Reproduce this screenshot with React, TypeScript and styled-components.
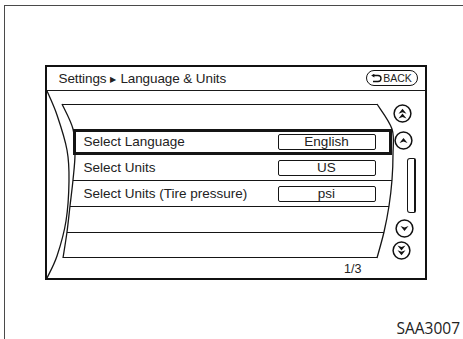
import React from "react";
import styled, { createGlobalStyle } from "styled-components";

type Pt = [number, number];

// Catmull-Rom through the measured points, as cubic bezier segments
const smooth = (pts: Pt[]) => {
  let d = `M${pts[0][0]} ${pts[0][1]}`;
  for (let i = 0; i < pts.length - 1; i++) {
    const p0 = pts[i - 1] || pts[i];
    const p1 = pts[i];
    const p2 = pts[i + 1];
    const p3 = pts[i + 2] || p2;
    const c1x = p1[0] + (p2[0] - p0[0]) / 6;
    const c1y = p1[1] + (p2[1] - p0[1]) / 6;
    const c2x = p2[0] - (p3[0] - p1[0]) / 6;
    const c2y = p2[1] - (p3[1] - p1[1]) / 6;
    d += ` C${c1x} ${c1y} ${c2x} ${c2y} ${p2[0]} ${p2[1]}`;
  }
  return d;
};

const leftEdge: Pt[] = [
  [15, 13], [26, 38], [28, 63], [26, 89], [23, 115], [20, 141], [16, 167],
];
const rightEdge: Pt[] = [
  [330, 13], [345, 38], [346, 63], [345, 89], [342, 115], [337, 141], [330, 167],
];
const outerEdge: Pt[] = [
  [0, 0], [10, 24], [20, 59], [22, 90], [19, 130], [10, 165], [0, 187],
];

const VALUE_RIGHT = 329;
const TEXT_LEFT = 37;

const rows = [
  { label: "", value: "" },
  { label: "Select Language", value: "English", active: true },
  { label: "Select Units", value: "US" },
  { label: "Select Units (Tire pressure)", value: "psi" },
  { label: "", value: "" },
  { label: "", value: "" },
];

const GlobalStyle = createGlobalStyle`
  html, body {
    margin: 0;
    padding: 0;
    background: #fff;
  }
  body {
    font-family: "Liberation Sans", Arial, sans-serif;
    color: #1a1a1a;
  }
`;

const Page = styled.div`
  width: 463px;
  height: 339px;
  box-sizing: border-box;
  padding: 5px 0 0 4px;
  overflow: hidden;
`;

const Frame = styled.div`
  height: 100%;
  box-sizing: border-box;
  border-top: 1.5px solid #4a4a4a;
  border-left: 1.5px solid #4a4a4a;
  display: flex;
  flex-direction: column;
  padding: 58.5px 0 0 39.5px;
`;

const Screen = styled.div`
  width: 382px;
  height: 215px;
  box-sizing: border-box;
  border: 2px solid #111;
  display: flex;
  flex-direction: column;
`;

const Header = styled.div`
  height: 23px;
  flex: none;
  border-bottom: 1.5px solid #1a1a1a;
  display: flex;
  align-items: center;
  justify-content: space-between;
  padding: 0 7px 0 12px;
`;

const Title = styled.div`
  font-size: 13.5px;
  letter-spacing: -0.1px;
  color: #222;
`;

const Crumb = styled.span`
  font-size: 8px;
  margin: 0 4px;
  position: relative;
  top: -1px;
`;

const BackButton = styled.div`
  width: 52px;
  height: 16px;
  box-sizing: border-box;
  border: 1.5px solid #111;
  border-radius: 8px;
  display: flex;
  align-items: center;
  justify-content: center;
  gap: 1px;
  font-size: 10.5px;
  color: #222;
`;

const Body = styled.div`
  flex: 1;
  position: relative;
  display: flex;
`;

const CurveLayer = styled.svg`
  position: absolute;
  inset: 0;
  width: 100%;
  height: 100%;
  pointer-events: none;
  overflow: visible;
`;

const List = styled.div`
  width: 346px;
  flex: none;
  display: flex;
  flex-direction: column;
  padding-top: 13px;
`;

const Row = styled.div<{ $left: number; $right: number; $active?: boolean; $noTop?: boolean }>`
  height: 25.67px;
  box-sizing: border-box;
  margin-left: ${(p) => p.$left}px;
  width: ${(p) => p.$right - p.$left}px;
  border-top: ${(p) => (p.$active ? "3px" : p.$noTop ? "0" : "1.2px")} solid #151515;
  border-left: ${(p) => (p.$active ? "3px solid #151515" : "none")};
  border-right: ${(p) => (p.$active ? "3px solid #151515" : "none")};
  border-bottom: ${(p) => (p.$active ? "3px solid #151515" : "none")};
  padding-left: ${(p) => TEXT_LEFT - p.$left - (p.$active ? 3 : 0)}px;
  display: flex;
  align-items: center;
  font-size: 13.5px;
  color: #222;
`;

const ValueBox = styled.div<{ $gap: number }>`
  margin-left: auto;
  margin-right: ${(p) => p.$gap}px;
  width: 98px;
  height: 16px;
  box-sizing: border-box;
  border: 1.3px solid #151515;
  border-radius: 2px;
  display: flex;
  align-items: center;
  justify-content: center;
  font-size: 13.5px;
`;

const ClosingLine = styled.div<{ $left: number; $right: number }>`
  margin-left: ${(p) => p.$left}px;
  width: ${(p) => p.$right - p.$left}px;
  border-top: 1.2px solid #151515;
`;

const PageNum = styled.div`
  align-self: flex-end;
  margin: 4px 31px 0 0;
  font-size: 12.5px;
  line-height: 14px;
  color: #222;
`;

const ScrollCol = styled.div`
  flex: 1;
  display: flex;
  flex-direction: column;
  align-items: flex-start;
  padding-top: 13px;
`;

const Knob = styled.svg<{ $x: number; $top: number }>`
  display: block;
  width: 19px;
  height: 19px;
  margin-left: ${(p) => p.$x}px;
  margin-top: ${(p) => p.$top}px;
`;

const Track = styled.div`
  width: 9px;
  height: 55px;
  margin: 8px 0 0 14px;
  box-sizing: border-box;
  border: 1.2px solid #151515;
  border-right-width: 2.5px;
  border-radius: 3px 2px 2px 3px;
`;

const Caption = styled.div`
  margin-top: auto;
  margin-bottom: 1px;
  align-self: flex-end;
  padding-right: 3px;
  font-family: "Open Sans", "DejaVu Sans", sans-serif;
  font-size: 15.5px;
  line-height: 20px;
  color: #222;
`;

const Arrow = ({ y, flip }: { y: number; flip?: boolean }) => (
  <path
    d={`M-4 ${y + 2.5} L0 ${y - 2.5} L4 ${y + 2.5} L0 ${y + 1} Z`}
    fill="#111"
    transform={flip ? "rotate(180)" : undefined}
  />
);

const ScrollKnob = ({ x, top, double, down }: { x: number; top: number; double?: boolean; down?: boolean }) => (
  <Knob $x={x} $top={top} viewBox="-9.5 -9.5 19 19">
    <circle r="8.4" fill="#fff" stroke="#111" strokeWidth="1.5" />
    {double ? (
      <>
        <Arrow y={-2.2} flip={down} />
        <Arrow y={2.6} flip={down} />
      </>
    ) : (
      <Arrow y={0} flip={down} />
    )}
  </Knob>
);

const BackIcon = () => (
  <svg width="11" height="9" viewBox="0 0 11 9">
    <path d="M3 1.5 H7 A3 3 0 0 1 7 7.5 H2" fill="none" stroke="#111" strokeWidth="1.4" />
    <path d="M0.2 1.5 L3.4 -0.4 L3.4 3.4 Z" fill="#111" />
  </svg>
);

export default function App() {
  return (
    <>
      <GlobalStyle />
      <Page>
        <Frame>
          <Screen>
            <Header>
              <Title>
                Settings<Crumb>▶</Crumb>Language &amp; Units
              </Title>
              <BackButton>
                <BackIcon />
                BACK
              </BackButton>
            </Header>
            <Body>
              <CurveLayer>
                <path d={smooth(outerEdge)} fill="none" stroke="#151515" strokeWidth="1.3" />
                <path d={smooth(leftEdge)} fill="none" stroke="#151515" strokeWidth="1.3" />
                <path d={smooth(rightEdge)} fill="none" stroke="#151515" strokeWidth="1.3" />
              </CurveLayer>
              <List>
                {rows.map((r, i) => {
                  const left = leftEdge[i][0];
                  const right = rightEdge[i][0];
                  return (
                    <Row
                      key={i}
                      $left={left}
                      $right={right}
                      $active={r.active}
                      $noTop={!!rows[i - 1]?.active}
                    >
                      {r.label}
                      {r.value && (
                        <ValueBox $gap={right - VALUE_RIGHT - (r.active ? 3 : 0)}>{r.value}</ValueBox>
                      )}
                    </Row>
                  );
                })}
                <ClosingLine $left={leftEdge[6][0]} $right={rightEdge[6][0]} />
                <PageNum>1/3</PageNum>
              </List>
              <ScrollCol>
                <ScrollKnob x={0.5} top={0} double />
                <ScrollKnob x={1.5} top={8} />
                <Track />
                <ScrollKnob x={2} top={6} down />
                <ScrollKnob x={-0.5} top={3} double down />
              </ScrollCol>
            </Body>
          </Screen>
          <Caption>SAA3007</Caption>
        </Frame>
      </Page>
    </>
  );
}
